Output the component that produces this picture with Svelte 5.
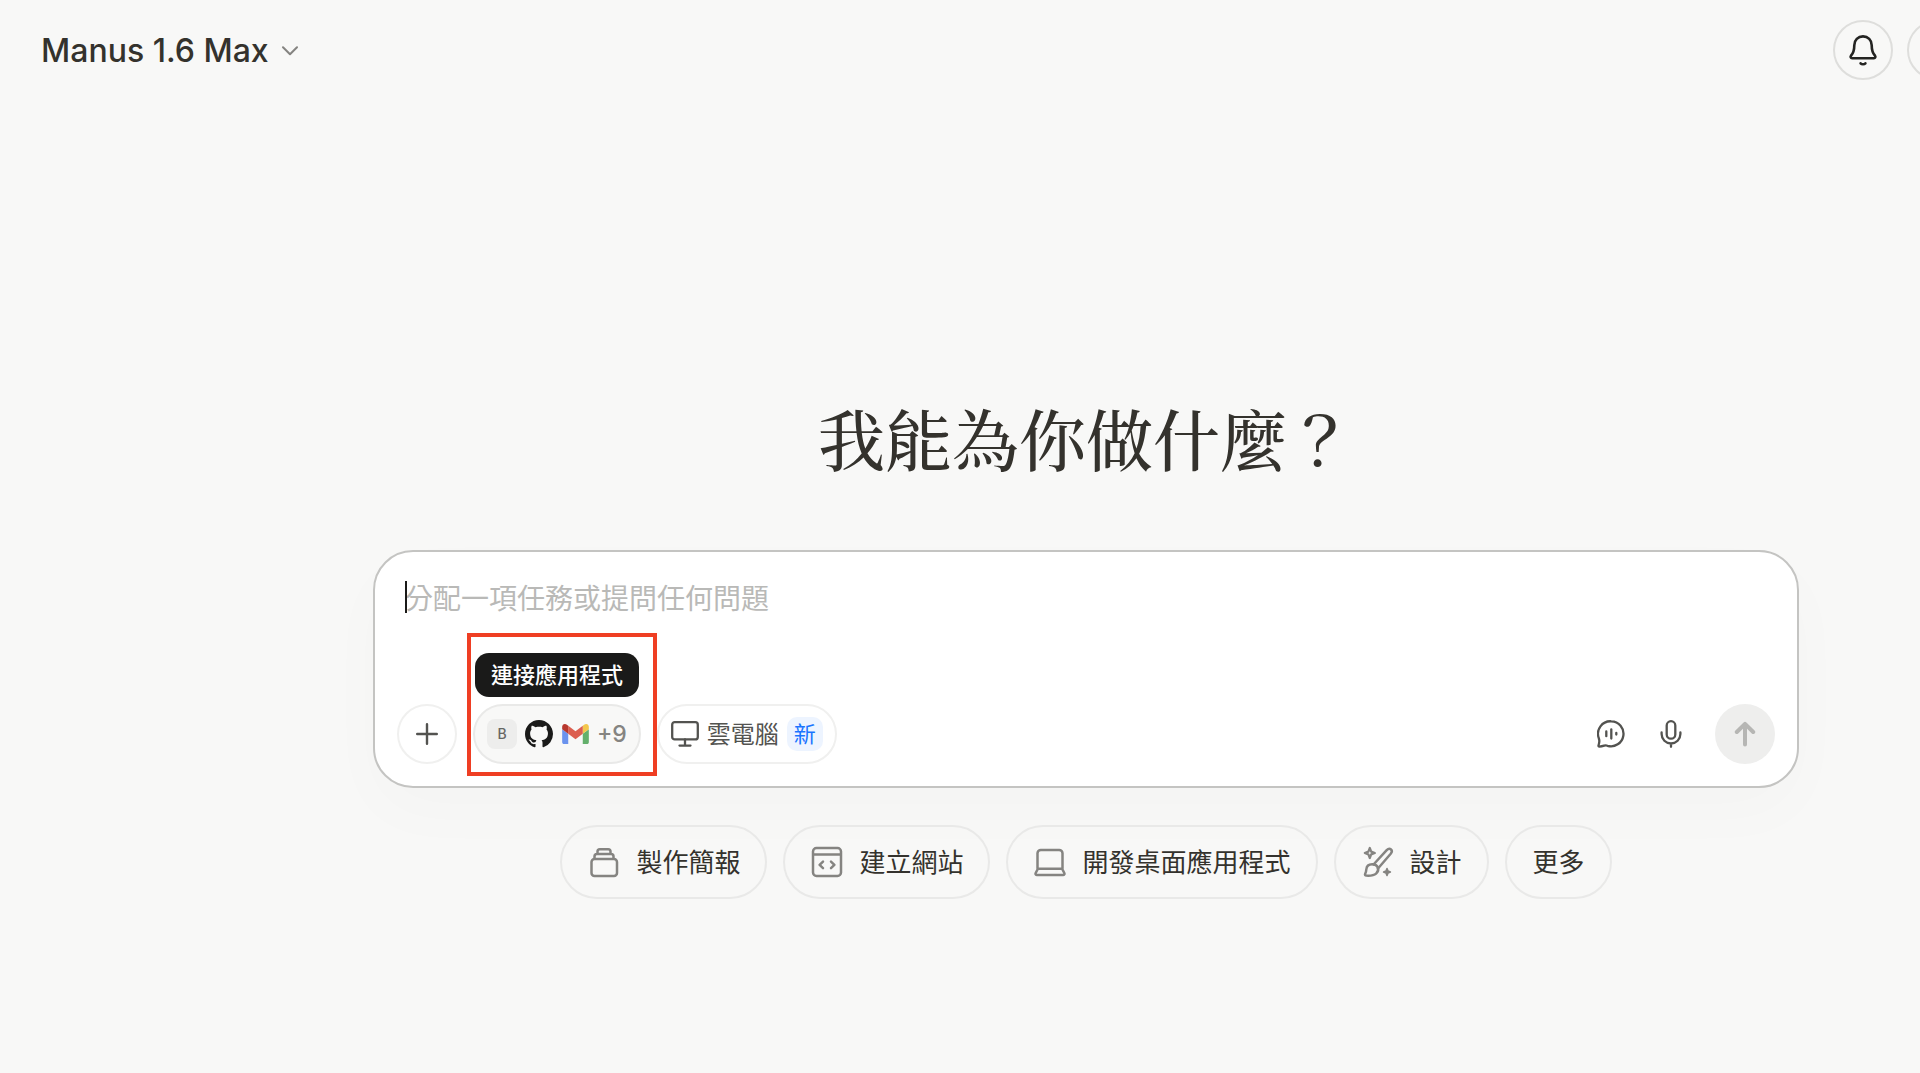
<script>
  let task = $state('');

  const chips = [
    { label: '製作簡報', icon: 'slides' },
    { label: '建立網站', icon: 'website' },
    { label: '開發桌面應用程式', icon: 'desktop' },
    { label: '設計', icon: 'design' },
    { label: '更多', icon: null }
  ];
</script>

<div class="page">
  <header>
    <button class="model">
      <span>Manus 1.6 Max</span>
      <svg width="18" height="10" viewBox="0 0 18 10" fill="none" stroke="#858481" stroke-width="2" stroke-linecap="round" stroke-linejoin="round"><path d="M2 1.2 9 8.2 16 1.2" /></svg>
    </button>
    <div class="actions">
      <button class="round" aria-label="通知">
        <svg width="30" height="32" viewBox="0 0 30 32" fill="none" stroke="#242422" stroke-width="2.6" stroke-linecap="round" stroke-linejoin="round">
          <path d="M15 2.4c-5 0-8.7 3.9-8.7 8.8 0 5.200-.8 7.700-3.200 10.300-1 1.200-.4 2.700 1 2.700h21.800c1.400 0 2-1.500 1-2.700-2.400-2.600-3.200-5.100-3.200-10.300 0-4.900-3.700-8.800-8.700-8.800z" />
          <path d="M12.600 29.300c.6.700 1.400 1 2.400 1s1.800-.3 2.400-1" />
        </svg>
      </button>
      <button class="round" aria-label="帳戶"></button>
    </div>
  </header>

  <main>
    <h1>我能為你做什麼？</h1>

    <form class="composer" onsubmit={(e) => e.preventDefault()}>
      <div class="field">
        <textarea rows="1" bind:value={task} aria-label="任務" placeholder="分配一項任務或提問任何問題"></textarea>
        <span class="caret"></span>
      </div>
      <div class="tools">
        <button type="button" class="tool add" aria-label="新增">
          <svg width="22" height="22" viewBox="0 0 22 22" fill="none" stroke="#535350" stroke-width="2.400" stroke-linecap="round"><path d="M11 1.200v19.600M1.200 11h19.600" /></svg>
        </button>

        <div class="connect">
          <button type="button" class="tool apps" aria-describedby="apps-tip">
            <span class="letter">B</span>
            <svg class="github" width="28" height="28" viewBox="0 0 16 16" fill="#1a1a19"><path d="M8 0C3.580 0 0 3.580 0 8c0 3.540 2.290 6.530 5.470 7.590.4.070.55-.17.55-.38 0-.19-.010-.82-.010-1.490-2.010.37-2.530-.49-2.690-.94-.090-.23-.48-.94-.82-1.130-.28-.15-.68-.52-.010-.53.63-.010 1.080.58 1.230.82.72 1.210 1.870.87 2.330.66.070-.52.28-.87.510-1.070-1.780-.2-3.640-.89-3.640-3.950 0-.87.310-1.590.82-2.150-.080-.2-.36-1.020.080-2.120 0 0 .67-.21 2.200.82.64-.18 1.320-.27 2-.27s1.360.090 2 .27c1.530-1.040 2.200-.82 2.200-.82.44 1.100.16 1.920.080 2.120.510.56.82 1.270.82 2.150 0 3.070-1.870 3.750-3.650 3.950.29.25.54.73.54 1.480 0 1.070-.010 1.930-.010 2.200 0 .21.15.46.55.38A8.010 8.010 0 0 0 16 8c0-4.420-3.580-8-8-8z" /></svg>
            <svg class="gmail" width="27" height="20" viewBox="52 42 88 66">
              <path fill="#6b93ee" d="M58 108h14V74L52 59v43c0 3.320 2.690 6 6 6" />
              <path fill="#64b06c" d="M120 108h14c3.320 0 6-2.690 6-6V59l-20 15" />
              <path fill="#f3c74d" d="M120 48v26l20-15v-8c0-7.420-8.470-11.650-14.400-7.200" />
              <path fill="#dc5f50" d="M72 74V48l24 18 24-18v26L96 92" />
              <path fill="#b8382e" d="M52 51v8l20 15V48l-5.600-4.200c-5.940-4.450-14.400-.22-14.400 7.200" />
            </svg>
            <span class="count">+9</span>
          </button>
          <span class="tip" id="apps-tip" role="tooltip">連接應用程式</span>
          <span class="marker"></span>
        </div>

        <button type="button" class="tool cloud">
          <svg width="28" height="26" viewBox="0 0 28 26" fill="none" stroke="#535350" stroke-width="2.300" stroke-linecap="round" stroke-linejoin="round"><rect x="1.200" y="1.200" width="25.600" height="17.200" rx="2.500" /><path d="M14 18.500v5.700M8.500 24.600h11" /></svg>
          <span class="label">雲電腦</span>
          <span class="new">新</span>
        </button>

        <div class="right">
          <button type="button" class="plain" aria-label="語音對話">
            <svg width="28" height="28" viewBox="0 0 28 28" fill="none" stroke="#535350" stroke-width="2.300" stroke-linecap="round" stroke-linejoin="round">
              <path d="M14.300 1.300a12.500 12.500 0 1 1-3.800 24.500c-1.200-.5-2.200-.5-3.300-.1-1.700.6-3.300.9-4.900.9-.6 0-1-.5-.8-1.100.6-1.800.9-3.300.8-4.700 0-.9-.3-1.600-.5-2.600A12.500 12.500 0 0 1 14.300 1.300z" />
              <path d="M9.300 11.500v4.700M14.300 9.300v9.300M19.300 13v1.600" />
            </svg>
          </button>
          <button type="button" class="plain" aria-label="語音輸入">
            <svg width="22" height="28" viewBox="0 0 22 28" fill="none" stroke="#535350" stroke-width="2.300" stroke-linecap="round" stroke-linejoin="round"><rect x="6.700" y="1.200" width="8.600" height="17.500" rx="4.300" /><path d="M1.600 12.500v1.600a9.400 9.400 0 0 0 18.800 0v-1.600M11 23.600v3.200" /></svg>
          </button>
          <button type="submit" class="send" aria-label="送出">
            <svg width="22" height="26" viewBox="0 0 22 26" fill="none" stroke="#b6b6b4" stroke-width="4" stroke-linecap="round" stroke-linejoin="round"><path d="M11 23.500V3M2.800 11 11 2.800 19.200 11" /></svg>
          </button>
        </div>
      </div>
    </form>

    <nav aria-label="建議">
      {#each chips as chip}
        <button class="chip">
          {#if chip.icon}
            <svg width="32" height="32" viewBox="0 0 32 32" fill="none" stroke="#858481" stroke-width="2.500" stroke-linecap="round" stroke-linejoin="round">
              {#if chip.icon === 'slides'}
                <rect x="3.500" y="13" width="25.500" height="17" rx="3" />
                <path d="M6.500 12.500V10.500a2.500 2.500 0 0 1 2.500-2.500h14a2.500 2.500 0 0 1 2.500 2.500v2M9.500 7.500v-2a2.300 2.300 0 0 1 2.300-2.300h8.400a2.300 2.300 0 0 1 2.300 2.300v2" />
              {:else if chip.icon === 'website'}
                <rect x="2" y="2" width="28" height="28" rx="3.500" />
                <path d="M2.500 8.600h27M12 15.700l-3.400 3.200 3.400 3.200M20 15.700l3.400 3.200-3.400 3.200" />
              {:else if chip.icon === 'desktop'}
                <path d="M3.500 22.500V7.300A3.300 3.300 0 0 1 6.800 4h18.400a3.300 3.300 0 0 1 3.300 3.300v15.200M3.900 22.700h24.200l2.200 4.300c.5 1-.1 2-1.200 2H2.900c-1.100 0-1.700-1-1.200-2z" />
              {:else}
                <path d="M11.500 18.500 24.700 4.200c1.400-1.500 3.200-1.700 4.300-.7s1 2.700-.3 4.300L16 22.500" />
                <path d="M10.800 18.300c-3.800-.2-6.200 2-6.500 5.200-.1 1.800-.5 3-1.100 4.200-.5 1.100 0 1.800 1.100 1.900 3.500.2 7.600-.1 9.800-2 2-1.800 2.600-3.900 1.700-6-.8-1.900-2.600-3.200-5-3.300z" />
                <path d="M7.800 2 9.200 5.600l3.600 1.400-3.600 1.400L7.800 12 6.400 8.400 2.800 7l3.600-1.400z" stroke-width="2.200" />
                <path d="m25 22.600 1 2.400 2.400 1-2.400 1-1 2.400-1-2.400-2.400-1 2.400-1z" fill="#858481" stroke-width="1.600" />
              {/if}
            </svg>
          {/if}
          <span class="label">{chip.label}</span>
        </button>
      {/each}
    </nav>
  </main>
</div>

<style>
  :global(body) {
    margin: 0;
    background: #f8f8f7;
  }
  .page {
    min-height: 100vh;
    overflow: hidden;
    color: #34322d;
    font-family: Inter, 'Noto Sans CJK TC', sans-serif;
  }
  button {
    box-sizing: border-box;
    display: flex;
    align-items: center;
    margin: 0;
    padding: 0;
    border: 0;
    background: none;
    color: inherit;
    font: inherit;
    white-space: nowrap;
  }
  svg {
    display: block;
    flex: none;
  }
  header {
    display: flex;
    align-items: center;
    justify-content: space-between;
    height: 100px;
    padding-left: 41px;
  }
  .model {
    gap: 12px;
    padding-top: 2px;
    font-size: 32px;
    line-height: 40px;
    font-weight: 500;
  }
  .actions {
    display: flex;
    gap: 14px;
    margin-right: -47px;
  }
  .round {
    justify-content: center;
    width: 60px;
    height: 60px;
    border: 2px solid #dededc;
    border-radius: 50%;
  }
  main {
    padding: 289px 121px 0 373px;
  }
  h1 {
    margin: 0 0 65px;
    font-family: 'Noto Serif CJK TC', 'Noto Sans CJK TC', serif;
    font-size: 67px;
    line-height: 96px;
    font-weight: 500;
    text-align: center;
  }
  .composer {
    padding: 29px 22px 22px;
    border: 2px solid #c4c4c2;
    border-radius: 40px;
    background: #fff;
    box-shadow: 0 24px 64px rgba(0, 0, 0, 0.02);
  }
  .field {
    position: relative;
    margin: 0 8px 91px;
  }
  textarea {
    display: block;
    box-sizing: border-box;
    width: 100%;
    height: 32px;
    padding: 0;
    border: 0;
    outline: 0;
    resize: none;
    overflow: hidden;
    background: none;
    color: #34322d;
    font-family: 'Noto Sans CJK TC', sans-serif;
    font-size: 28px;
    line-height: 32px;
  }
  textarea::placeholder {
    color: #b9b9b7;
    opacity: 1;
  }
  .caret {
    position: absolute;
    top: 0;
    left: 0;
    width: 2px;
    height: 32px;
    background: #1a1a19;
  }
  .tools {
    display: flex;
    align-items: center;
    gap: 16px;
  }
  .tool {
    height: 60px;
    border: 2px solid #f0f0ef;
    border-radius: 30px;
  }
  .add {
    justify-content: center;
    width: 60px;
  }
  .connect {
    position: relative;
  }
  .apps {
    padding: 0 12px;
    border-color: #e9e9e8;
    background: #f8f8f7;
  }
  .letter {
    width: 30px;
    border-radius: 8px;
    background: #ededec;
    color: #666663;
    font-size: 14px;
    line-height: 30px;
    font-weight: 500;
    text-align: center;
  }
  .github {
    margin: 0 9px 0 8px;
  }
  .count {
    margin-left: 8px;
    color: #858481;
    font-size: 23px;
    font-weight: 500;
  }
  .tip {
    position: absolute;
    bottom: calc(100% + 7px);
    left: 2px;
    padding: 0 16px;
    border-radius: 14px;
    background: #1a1a19;
    color: #fff;
    font-size: 22px;
    line-height: 44px;
    font-weight: 500;
    white-space: nowrap;
  }
  .marker {
    position: absolute;
    top: -71px;
    right: -16px;
    bottom: -12px;
    left: -6px;
    border: 4px solid #ef3e23;
    pointer-events: none;
  }
  .label {
    padding-bottom: 3px;
  }
  .cloud {
    gap: 8px;
    padding: 0 12px;
    color: #535350;
    font-size: 24px;
  }
  .new {
    padding: 0 7px;
    border-radius: 10px;
    background: #edf4ff;
    color: #1a75ff;
    font-size: 22px;
    line-height: 34px;
  }
  .right {
    display: flex;
    align-items: center;
    margin-left: auto;
  }
  .plain {
    justify-content: center;
    width: 60px;
    height: 60px;
  }
  .send {
    justify-content: center;
    width: 60px;
    height: 60px;
    margin-left: 14px;
    border-radius: 50%;
    background: #eeeeed;
  }
  nav {
    display: flex;
    flex-wrap: wrap;
    justify-content: center;
    gap: 16px;
    margin-top: 37px;
  }
  .chip {
    gap: 16px;
    height: 74px;
    padding: 0 25px 0 26px;
    border: 2px solid #e9e9e8;
    border-radius: 37px;
    font-size: 26px;
  }
</style>
